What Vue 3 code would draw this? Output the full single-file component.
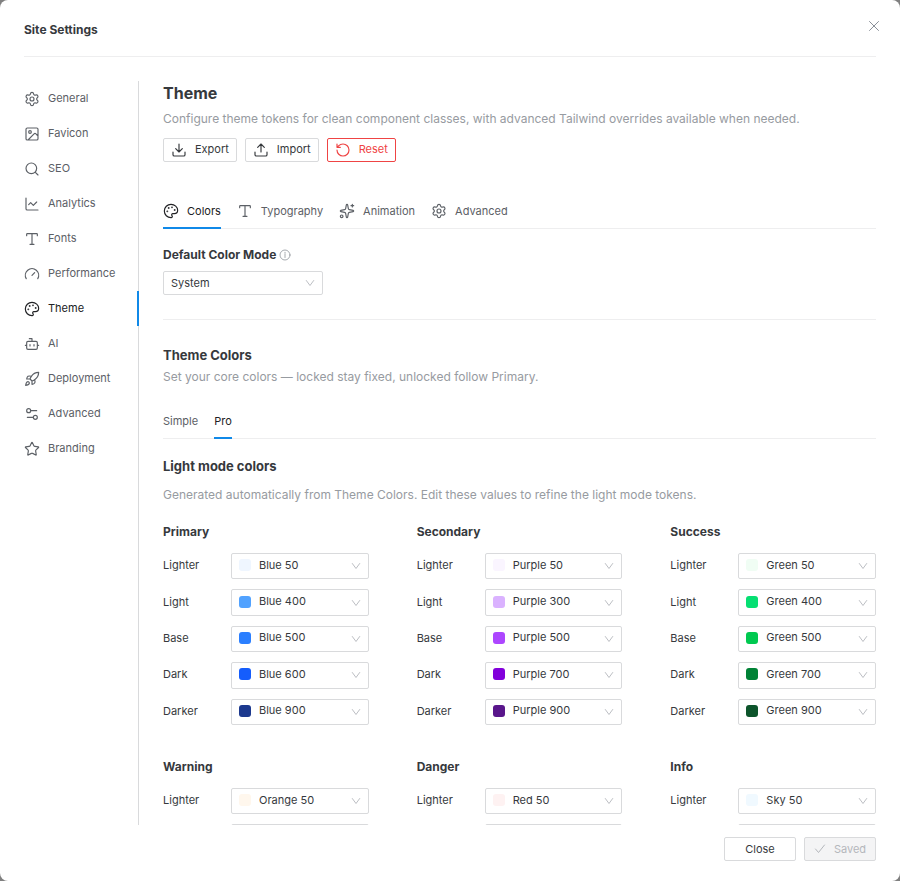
<script setup>
import { ref } from 'vue'

const dot = (x, y, r) => `M${x - r} ${y}a${r} ${r} 0 1 0 ${r * 2} 0a${r} ${r} 0 1 0 ${-r * 2} 0z`

const icons = {
  gear: 'M9.671 4.136a2.34 2.34 0 0 1 4.659 0 2.34 2.34 0 0 0 3.319 1.915 2.34 2.34 0 0 1 2.33 4.033 2.34 2.34 0 0 0 0 3.831 2.34 2.34 0 0 1-2.33 4.033 2.34 2.34 0 0 0-3.319 1.915 2.34 2.34 0 0 1-4.659 0 2.34 2.34 0 0 0-3.32-1.915 2.34 2.34 0 0 1-2.33-4.033 2.34 2.34 0 0 0 0-3.831A2.34 2.34 0 0 1 6.35 6.051a2.34 2.34 0 0 0 3.319-1.915' + dot(12, 12, 3),
  image: 'M5 3h14a2 2 0 0 1 2 2v14a2 2 0 0 1-2 2H5a2 2 0 0 1-2-2V5a2 2 0 0 1 2-2zM21 15l-3.086-3.086a2 2 0 0 0-2.828 0L6 21' + dot(9, 9, 2),
  search: 'M21 21l-4.34-4.34' + dot(11, 11, 8),
  chart: 'M3 3v16a2 2 0 0 0 2 2h16M19 9l-5 5-4-4-3 3',
  type: 'M12 4v16M4 7V5a1 1 0 0 1 1-1h14a1 1 0 0 1 1 1v2M9 20h6',
  gauge: 'M12 14l4-4M3.34 19a10 10 0 1 1 17.32 0',
  palette: 'M12 22a1 1 0 0 1 0-20 10 9 0 0 1 10 9 5 5 0 0 1-5 5h-2.25a1.75 1.75 0 0 0-1.4 2.8l.3.4a1.75 1.75 0 0 1-1.4 2.8z' + dot(13.5, 6.5, 0.5) + dot(17.5, 10.5, 0.5) + dot(6.5, 12.5, 0.5) + dot(8.5, 7.5, 0.5),
  bot: 'M12 8V4H8M6 8h12a2 2 0 0 1 2 2v8a2 2 0 0 1-2 2H6a2 2 0 0 1-2-2v-8a2 2 0 0 1 2-2zM2 14h2M20 14h2M15 13v2M9 13v2',
  rocket: 'M4.5 16.5c-1.5 1.26-2 5-2 5s3.74-.5 5-2c.71-.84.7-2.13-.09-2.91a2.18 2.18 0 0 0-2.91-.09zM12 15l-3-3a22 22 0 0 1 2-3.95A12.88 12.88 0 0 1 22 2c0 2.72-.78 7.5-6 11a22.35 22.35 0 0 1-4 2zM9 12H4s.55-3.03 2-4c1.62-1.08 5 0 5 0M12 15v5s3.03-.55 4-2c1.08-1.62 0-5 0-5',
  sliders: 'M14 17H5M19 7h-9' + dot(17, 17, 3) + dot(7, 7, 3),
  star: 'M11.525 2.295a.53.53 0 0 1 .95 0l2.31 4.679a2.123 2.123 0 0 0 1.595 1.16l5.166.756a.53.53 0 0 1 .294.904l-3.736 3.638a2.123 2.123 0 0 0-.611 1.878l.882 5.14a.53.53 0 0 1-.771.56l-4.618-2.428a2.122 2.122 0 0 0-1.973 0L6.396 21.01a.53.53 0 0 1-.77-.56l.881-5.139a2.122 2.122 0 0 0-.611-1.879L2.16 9.795a.53.53 0 0 1 .294-.906l5.165-.755a2.122 2.122 0 0 0 1.597-1.16z',
  sparkles: 'M11.017 2.814a1 1 0 0 1 1.966 0l1.051 5.558a2 2 0 0 0 1.594 1.594l5.558 1.051a1 1 0 0 1 0 1.966l-5.558 1.051a2 2 0 0 0-1.594 1.594l-1.051 5.558a1 1 0 0 1-1.966 0l-1.051-5.558a2 2 0 0 0-1.594-1.594l-5.558-1.051a1 1 0 0 1 0-1.966l5.558-1.051a2 2 0 0 0 1.594-1.594zM20 2v4M22 4h-4' + dot(4, 20, 2),
  download: 'M12 15V3M21 15v4a2 2 0 0 1-2 2H5a2 2 0 0 1-2-2v-4M7 10l5 5 5-5',
  upload: 'M12 3v12M17 8l-5-5-5 5M21 15v4a2 2 0 0 1-2 2H5a2 2 0 0 1-2-2v-4',
  reset: 'M3 12a9 9 0 1 0 9-9 9.75 9.75 0 0 0-6.74 2.74L3 8M3 3v5h5'
}

const sections = [
  ['General', 'gear'],
  ['Favicon', 'image'],
  ['SEO', 'search'],
  ['Analytics', 'chart'],
  ['Fonts', 'type'],
  ['Performance', 'gauge'],
  ['Theme', 'palette'],
  ['AI', 'bot'],
  ['Deployment', 'rocket'],
  ['Advanced', 'sliders'],
  ['Branding', 'star']
]
const section = ref('Theme')

const actions = [
  ['Export', 'download'],
  ['Import', 'upload'],
  ['Reset', 'reset']
]

const tabs = [
  ['Colors', 'palette'],
  ['Typography', 'type'],
  ['Animation', 'sparkles'],
  ['Advanced', 'gear']
]
const tab = ref('Colors')
const level = ref('Pro')
const mode = ref('System')

const palette = {
  Blue: { 50: '#eff6ff', 400: '#51a2ff', 500: '#2b7fff', 600: '#155dfc', 900: '#1c398e' },
  Purple: { 50: '#faf5ff', 300: '#dab2ff', 500: '#ad46ff', 700: '#8200db', 900: '#59168b' },
  Green: { 50: '#f0fdf4', 400: '#05df72', 500: '#00c950', 700: '#008236', 900: '#0d542b' },
  Orange: { 50: '#fff7ed', 400: '#ff8904', 500: '#ff6900', 700: '#ca3500', 900: '#7e2a0c' },
  Red: { 50: '#fef2f2', 400: '#ff6467', 500: '#fb2c36', 700: '#c10007', 900: '#82181a' },
  Sky: { 50: '#f0f9ff', 400: '#00bcff', 500: '#00a6f4', 700: '#0069a8', 900: '#024a70' }
}
const shades = ['Lighter', 'Light', 'Base', 'Dark', 'Darker']
const groups = ref(
  [
    ['Primary', 'Blue'],
    ['Secondary', 'Purple'],
    ['Success', 'Green'],
    ['Warning', 'Orange'],
    ['Danger', 'Red'],
    ['Info', 'Sky']
  ].map(([name, hue]) => ({
    name,
    hue,
    rows: Object.keys(palette[hue]).map((step, i) => ({ label: shades[i], step }))
  }))
)
</script>

<template>
  <div class="modal" role="dialog" aria-labelledby="dialog-title">
    <header class="head">
      <h1 id="dialog-title">Site Settings</h1>
      <button class="dismiss" type="button" aria-label="Close dialog">
        <svg viewBox="0 0 12 12" width="12" height="12"><path d="M1.500 1.500l9 9M10.500 1.500l-9 9" /></svg>
      </button>
    </header>

    <div class="body">
      <nav class="side" aria-label="Settings sections">
        <button
          v-for="[name, icon] in sections"
          :key="name"
          type="button"
          :class="{ active: section === name }"
          @click="section = name"
        >
          <svg class="icon" viewBox="0 0 24 24"><path :d="icons[icon]" /></svg>
          <span>{{ name }}</span>
        </button>
      </nav>

      <main class="content">
        <h2>Theme</h2>
        <p class="hint">Configure theme tokens for clean component classes, with advanced Tailwind overrides available when needed.</p>
        <div class="actions">
          <button
            v-for="[name, icon] in actions"
            :key="name"
            type="button"
            class="btn"
            :class="{ danger: name === 'Reset' }"
          >
            <svg class="icon" viewBox="0 0 24 24"><path :d="icons[icon]" /></svg>
            <span>{{ name }}</span>
          </button>
        </div>

        <div class="tabs" role="tablist">
          <button
            v-for="[name, icon] in tabs"
            :key="name"
            type="button"
            role="tab"
            :aria-selected="tab === name"
            :class="{ active: tab === name }"
            @click="tab = name"
          >
            <svg class="icon" viewBox="0 0 24 24"><path :d="icons[icon]" /></svg>
            <span>{{ name }}</span>
          </button>
        </div>

        <section class="mode">
          <div class="mode-title">
            <label for="mode">Default Color Mode</label>
            <svg class="info" viewBox="0 0 12 12" width="12" height="12">
              <circle cx="6" cy="6" r="5" />
              <path d="M6 5.300v3.200M6 3.300v1" />
            </svg>
          </div>
          <div class="picker mode-picker">
            <select id="mode" v-model="mode">
              <option>System</option>
              <option>Light</option>
              <option>Dark</option>
            </select>
            <svg class="chevron" viewBox="0 0 10 10"><path d="M1.300 2.500l3.700 5 3.700-5" /></svg>
          </div>
        </section>

        <section class="core">
          <h3>Theme Colors</h3>
          <p class="hint">Set your core colors — locked stay fixed, unlocked follow Primary.</p>
          <div class="tabs" role="tablist">
            <button
              v-for="name in ['Simple', 'Pro']"
              :key="name"
              type="button"
              role="tab"
              :aria-selected="level === name"
              :class="{ active: level === name }"
              @click="level = name"
            >
              {{ name }}
            </button>
          </div>
        </section>

        <section class="tokens">
          <h3>Light mode colors</h3>
          <p class="hint">Generated automatically from Theme Colors. Edit these values to refine the light mode tokens.</p>
          <div class="groups">
            <section v-for="group in groups" :key="group.name">
              <h4>{{ group.name }}</h4>
              <div class="rows">
                <div v-for="row in group.rows" :key="row.label" class="row">
                  <label :for="group.name + row.label">{{ row.label }}</label>
                  <div class="picker color-picker">
                    <select :id="group.name + row.label" v-model="row.step">
                      <option v-for="(hex, step) in palette[group.hue]" :key="step" :value="step">
                        {{ group.hue }} {{ step }}
                      </option>
                    </select>
                    <span class="swatch" :style="{ background: palette[group.hue][row.step] }"></span>
                    <svg class="chevron" viewBox="0 0 10 10"><path d="M1.300 2.500l3.700 5 3.700-5" /></svg>
                  </div>
                </div>
              </div>
            </section>
          </div>
        </section>
      </main>
    </div>

    <footer class="foot">
      <button class="btn" type="button">Close</button>
      <button class="btn" type="button" disabled>
        <svg class="check" viewBox="0 0 12 12" width="12" height="12"><path d="M1.500 6l3 3.500 6-7.500" /></svg>
        <span>Saved</span>
      </button>
    </footer>
  </div>
</template>

<style>
body {
  margin: 0;
  background: #808080;
}
</style>

<style scoped>
* {
  box-sizing: border-box;
}

.modal {
  display: flex;
  flex-direction: column;
  height: 100vh;
  padding: 0 24px;
  border-radius: 8px;
  background: #fff;
  color: #36393d;
  font-family: Inter, "Liberation Sans", sans-serif;
  font-size: 11px;
  line-height: 16px;
}

h1,
h2,
h3,
h4,
p {
  margin: 0;
}

button,
select {
  margin: 0;
  font: inherit;
  color: inherit;
}

button {
  cursor: pointer;
}

svg {
  flex: none;
  fill: none;
  stroke: currentColor;
  stroke-linecap: round;
  stroke-linejoin: round;
}

.icon {
  width: 16px;
  height: 16px;
  stroke-width: 1.75;
}

h1,
h3,
h4,
.mode-title {
  font-size: 12px;
  font-weight: 700;
  line-height: 16px;
}

h3 {
  font-size: 13px;
}

.head {
  display: flex;
  justify-content: space-between;
  align-items: center;
  height: 57px;
  padding-top: 4px;
  border-bottom: 1px solid #eeeeef;
}

.dismiss {
  display: flex;
  margin: 0 -4px 8px 0;
  padding: 0;
  border: 0;
  background: none;
  color: #8a9099;
}

.body {
  display: flex;
  flex: 1;
  min-height: 0;
  padding-top: 24px;
}

.side {
  display: flex;
  flex: none;
  flex-direction: column;
  width: 115px;
  border-right: 1px solid #d9dadc;
}

.side button {
  display: flex;
  align-items: center;
  gap: 8px;
  height: 35px;
  margin-right: -1px;
  padding: 0;
  border: 0;
  border-right: 2px solid transparent;
  background: none;
  color: #5c6066;
}

.side span,
.actions span,
.row label {
  padding-bottom: 2px;
}

.side .active {
  border-right-color: #1089e8;
  color: #202124;
}

.content {
  flex: 1;
  min-width: 0;
  padding-left: 24px;
  overflow-y: auto;
  scrollbar-width: none;
}

h2 {
  font-size: 16px;
  font-weight: 700;
  line-height: 24px;
}

.hint {
  color: #979ba1;
  font-size: 12px;
  line-height: 20px;
}

h2 + .hint {
  margin-top: 4px;
}

.actions {
  display: flex;
  gap: 8px;
  margin-top: 9px;
}

.btn {
  display: flex;
  align-items: center;
  justify-content: center;
  gap: 8px;
  height: 24px;
  padding: 0 7px;
  border: 1px solid #d9dadc;
  border-radius: 2px;
  background: #fff;
}

.btn.danger {
  border-color: #ef4444;
  color: #ef4444;
}

.tabs {
  display: flex;
  gap: 16px;
  height: 35px;
  border-bottom: 1px solid #eeeeef;
}

.tabs button {
  display: flex;
  align-items: center;
  gap: 8px;
  height: 35px;
  padding: 0;
  border: 0;
  border-bottom: 2px solid transparent;
  background: none;
  color: #5c6066;
}

.tabs .active {
  border-bottom-color: #1089e8;
  color: #202124;
}

.actions + .tabs {
  margin-top: 32px;
}

.mode {
  padding: 18px 0 24px;
  border-bottom: 1px solid #eeeeef;
}

.mode-title {
  display: flex;
  align-items: center;
  gap: 3px;
}

.info {
  color: #8f949b;
  stroke-width: 0.8;
}

.picker {
  display: grid;
  align-items: center;
}

.picker > * {
  grid-area: 1 / 1;
}

.picker select {
  width: 100%;
  height: 100%;
  border: 1px solid #d9dadc;
  border-radius: 2px;
  background: #fff;
  appearance: none;
}

.mode-picker {
  width: 160px;
  height: 24px;
  margin-top: 8px;
}

.mode-picker select {
  padding: 0 24px 0 7px;
}

.chevron {
  justify-self: end;
  width: 10px;
  height: 10px;
  margin-right: 8px;
  color: #b4b7bc;
  stroke-width: 0.9;
  pointer-events: none;
}

.core {
  padding-top: 27px;
}

.core .hint {
  margin-top: 4px;
}

.core .tabs {
  margin-top: 17px;
}

.tokens {
  padding-top: 19px;
}

.tokens .hint {
  margin-top: 11px;
}

.groups {
  display: grid;
  grid-template-columns: repeat(3, 1fr);
  gap: 34px 48px;
  margin-top: 19px;
  padding-bottom: 24px;
}

.rows {
  display: grid;
  grid-auto-rows: 1fr;
  gap: 10px;
  min-height: 172px;
  margin-top: 13px;
}

.row {
  display: grid;
  grid-template-columns: 68px 1fr;
}

.row label {
  align-self: center;
}

.color-picker select {
  padding: 0 24px 3px 27px;
}

.swatch {
  width: 12px;
  height: 12px;
  margin: 0 0 2px 8px;
  border-radius: 3px;
  pointer-events: none;
}

.foot {
  display: flex;
  justify-content: flex-end;
  gap: 8px;
  padding: 12px 0 20px;
}

.foot .btn {
  width: 72px;
}

.btn:disabled {
  background: #f4f4f5;
  color: #b4b7bc;
  cursor: default;
}
</style>
